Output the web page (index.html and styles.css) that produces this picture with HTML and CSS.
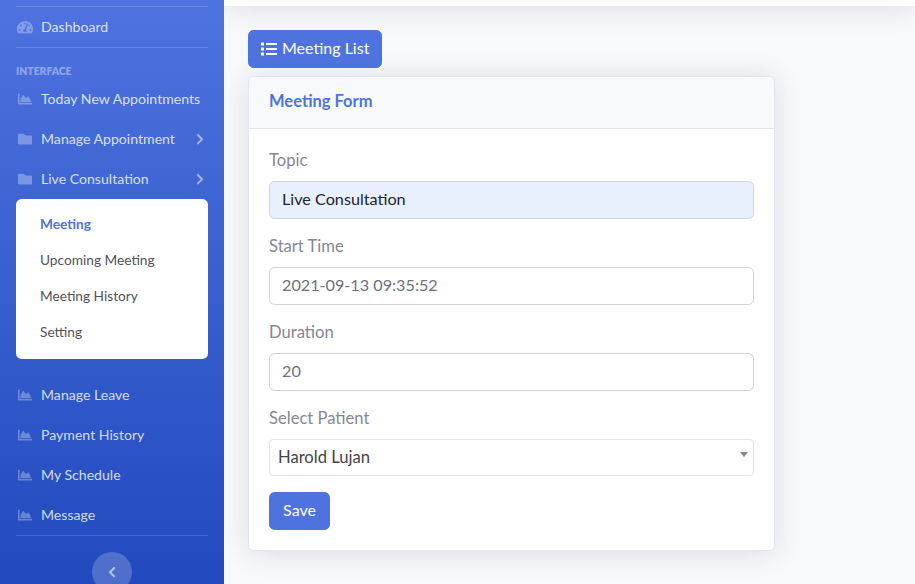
FILE: index.html
```html
<!DOCTYPE html>
<html lang="en">
<head>
  <meta charset="UTF-8" />
  <title>Meeting Form</title>
  <link rel="stylesheet" href="styles.css">
</head>
<body>

  <!-- Sidebar -->
  <aside class="sidebar">
    <hr class="divider first">
    <a class="nav-item dash" href="#">
      <svg class="nav-icon" viewBox="0 0 576 512"><path d="M288 32C128.940 32 0 160.940 0 320c0 52.800 14.250 102.260 39.060 144.800 5.610 9.620 16.300 15.200 27.440 15.200h443c11.140 0 21.830-5.580 27.440-15.200C561.750 422.260 576 372.800 576 320c0-159.060-128.940-288-288-288zm0 64c14.710 0 26.580 10.130 30.320 23.650-1.110 2.260-3.640 3.550-4.190 6.030l-5.910 22.130C305.860 146.270 297.150 160 288 160c-17.670 0-32-14.330-32-32s14.330-32 32-32zM96 384c-17.670 0-32-14.330-32-32s14.330-32 32-32 32 14.330 32 32-14.330 32-32 32zm48-160c-17.670 0-32-14.330-32-32s14.330-32 32-32 32 14.330 32 32-14.330 32-32 32zm246.770-72.410l-61.330 184C343.130 347.330 352 364.540 352 384c0 11.720-3.380 22.550-8.880 32H232.880c-5.500-9.450-8.880-20.280-8.880-32 0-33.940 26.500-61.430 59.900-63.590l61.340-184.010c4.170-12.560 17.730-19.450 30.360-15.170 12.570 4.190 19.350 17.770 15.170 30.360zm14.660 57.200l15.520-46.550c3.470-1.290 7.130-2.230 11.050-2.230 17.670 0 32 14.330 32 32s-14.330 32-32 32c-11.380-.01-20.890-6.280-26.570-15.220zM480 384c-17.670 0-32-14.330-32-32s14.330-32 32-32 32 14.330 32 32-14.330 32-32 32z"/></svg>
      <span>Dashboard</span>
    </a>
    <hr class="divider">
    <div class="heading">INTERFACE</div>

    <a class="nav-item" href="#">
      <svg class="nav-icon" viewBox="0 0 512 512"><use href="#area"/></svg>
      <span>Today New Appointments</span>
    </a>
    <a class="nav-item" href="#">
      <svg class="nav-icon" viewBox="0 0 512 512"><use href="#folder"/></svg>
      <span>Manage Appointment</span>
      <svg class="chev" viewBox="0 0 320 512"><use href="#chev-right"/></svg>
    </a>
    <a class="nav-item" href="#">
      <svg class="nav-icon" viewBox="0 0 512 512"><use href="#folder"/></svg>
      <span>Live Consultation</span>
      <svg class="chev" viewBox="0 0 320 512"><use href="#chev-right"/></svg>
    </a>

    <div class="submenu">
      <a class="active" href="#">Meeting</a>
      <a href="#">Upcoming Meeting</a>
      <a href="#">Meeting History</a>
      <a href="#">Setting</a>
    </div>

    <a class="nav-item" href="#">
      <svg class="nav-icon" viewBox="0 0 512 512"><use href="#area"/></svg>
      <span>Manage Leave</span>
    </a>
    <a class="nav-item" href="#">
      <svg class="nav-icon" viewBox="0 0 512 512"><use href="#area"/></svg>
      <span>Payment History</span>
    </a>
    <a class="nav-item" href="#">
      <svg class="nav-icon" viewBox="0 0 512 512"><use href="#area"/></svg>
      <span>My Schedule</span>
    </a>
    <a class="nav-item" href="#">
      <svg class="nav-icon" viewBox="0 0 512 512"><use href="#area"/></svg>
      <span>Message</span>
    </a>
    <hr class="divider">
    <button class="toggle" type="button">
      <svg viewBox="0 0 320 512"><path d="M34.520 239.030L228.870 44.690c9.370-9.370 24.570-9.370 33.940 0l22.670 22.670c9.360 9.360 9.370 24.520.04 33.900L131.490 256l154.020 154.750c9.340 9.380 9.320 24.540-.04 33.900l-22.670 22.670c-9.370 9.370-24.570 9.370-33.940 0L34.520 272.970c-9.370-9.370-9.370-24.570 0-33.940z"/></svg>
    </button>
  </aside>

  <!-- Content -->
  <main class="content">
    <div class="topbar"></div>
    <div class="page">
      <a class="btn list-btn" href="#">
        <svg class="list-icon" viewBox="0 0 512 512"><path d="M80 368H16a16 16 0 0 0-16 16v64a16 16 0 0 0 16 16h64a16 16 0 0 0 16-16v-64a16 16 0 0 0-16-16zm0-320H16A16 16 0 0 0 0 64v64a16 16 0 0 0 16 16h64a16 16 0 0 0 16-16V64a16 16 0 0 0-16-16zm0 160H16a16 16 0 0 0-16 16v64a16 16 0 0 0 16 16h64a16 16 0 0 0 16-16v-64a16 16 0 0 0-16-16zm416 176H176a16 16 0 0 0-16 16v32a16 16 0 0 0 16 16h320a16 16 0 0 0 16-16v-32a16 16 0 0 0-16-16zm0-320H176a16 16 0 0 0-16 16v32a16 16 0 0 0 16 16h320a16 16 0 0 0 16-16V80a16 16 0 0 0-16-16zm0 160H176a16 16 0 0 0-16 16v32a16 16 0 0 0 16 16h320a16 16 0 0 0 16-16v-32a16 16 0 0 0-16-16z"/></svg>
        Meeting List
      </a>

      <section class="card">
        <header class="card-header">Meeting Form</header>
        <form class="card-body">
          <label for="topic">Topic</label>
          <input class="field filled" type="text" id="topic" value="Live Consultation">

          <label for="start">Start Time</label>
          <input class="field" type="text" id="start" value="2021-09-13 09:35:52">

          <label for="duration">Duration</label>
          <input class="field" type="text" id="duration" value="20">

          <label>Select Patient</label>
          <div class="select">Harold Lujan<span class="caret"></span></div>

          <button class="btn save-btn" type="button">Save</button>
        </form>
      </section>
    </div>
  </main>

  <svg class="defs" width="0" height="0">
    <symbol id="area" viewBox="0 0 512 512"><path d="M500 384c6.600 0 12 5.400 12 12v40c0 6.600-5.400 12-12 12H12c-6.600 0-12-5.400-12-12V76c0-6.600 5.400-12 12-12h40c6.600 0 12 5.400 12 12v308h436zM372.700 159.500L288 216l-85.300-113.700c-5.100-6.800-15.500-6.300-19.900 1L96 248v104h384l-89.900-187.800c-3.200-6.500-11.400-8.700-17.400-4.700z"/></symbol>
    <symbol id="folder" viewBox="0 0 512 512"><path d="M464 128H272l-64-64H48C21.490 64 0 85.490 0 112v288c0 26.510 21.490 48 48 48h416c26.510 0 48-21.490 48-48V176c0-26.510-21.490-48-48-48z"/></symbol>
    <symbol id="chev-right" viewBox="0 0 320 512"><path d="M285.476 272.971L91.132 467.314c-9.373 9.373-24.569 9.373-33.941 0l-22.667-22.667c-9.357-9.357-9.375-24.522-.04-33.901L188.505 256 34.484 101.255c-9.335-9.379-9.317-24.544.04-33.901l22.667-22.667c9.373-9.373 24.569-9.373 33.941 0L285.475 239.030c9.373 9.372 9.373 24.568.001 33.941z"/></symbol>
  </svg>

</body>
</html>
```

FILE: styles.css
```css
* {
  box-sizing: border-box;
}
html, body {
  height: 100%;
}
body {
  margin: 0;
  display: flex;
  height: 584px;
  overflow: hidden;
  font-family: Lato, "Noto Sans", Arial, sans-serif;
  font-size: 16px;
  color: #858796;
  background-color: #f8f9fc;
}
a {
  text-decoration: none;
}
.defs {
  position: absolute;
}

/* sidebar */
.sidebar {
  position: relative;
  z-index: 1;
  width: 224px;
  flex: none;
  display: flex;
  flex-direction: column;
  padding: 0 16px;
  background: linear-gradient(180deg, #4e73df 0%, #224abe 100%);
  overflow: hidden;
}
.divider {
  width: 100%;
  margin: 0;
  border: 0;
  border-top: 1px solid rgba(255, 255, 255, 0.15);
}
.divider.first {
  margin-top: 6px;
}
.heading {
  margin: 17px 0 2px;
  height: 12px;
  line-height: 12px;
  font-size: 10.400px;
  font-weight: 800;
  color: rgba(255, 255, 255, 0.4);
}
.nav-item {
  height: 40px;
  flex: none;
  display: flex;
  align-items: center;
  font-size: 14.100px;
  color: rgba(255, 255, 255, 0.8);
}
.nav-item span {
  margin-bottom: 2px;
}
.nav-icon {
  width: 18px;
  height: 14.400px;
  margin-right: 7px;
  flex: none;
  fill: rgba(255, 255, 255, 0.3);
}
.chev {
  width: 8px;
  height: 12.300px;
  margin-left: auto;
  margin-right: 4px;
  fill: rgba(255, 255, 255, 0.5);
}
.submenu {
  height: 160px;
  flex: none;
  margin-bottom: 16px;
  padding: 8px 0;
  background-color: #fff;
  border-radius: 5.600px;
}
.submenu a {
  display: flex;
  align-items: center;
  height: 36px;
  padding: 0 0 4px 24px;
  font-size: 13.700px;
  color: #50515c;
}
.submenu a.active {
  font-weight: 700;
  color: #4e73df;
}
.toggle {
  width: 40px;
  height: 40px;
  flex: none;
  margin: 16px auto 0;
  padding: 0;
  display: flex;
  align-items: center;
  justify-content: center;
  border: 0;
  border-radius: 50%;
  background-color: rgba(255, 255, 255, 0.2);
}
.toggle svg {
  width: 8px;
  height: 12.300px;
  margin-right: 1px;
  fill: rgba(255, 255, 255, 0.6);
}

/* content */
.content {
  flex: 1;
  min-width: 0;
}
.topbar {
  height: 70px;
  margin-top: -64px;
  background-color: #fff;
  box-shadow: 0 2px 28px 0 rgba(58, 59, 69, 0.15);
}
.page {
  padding: 24px 0 0 24px;
}
.btn {
  display: inline-flex;
  align-items: center;
  justify-content: center;
  height: 38px;
  padding: 0 0 3px;
  border: 1px solid #4e73df;
  border-radius: 5.600px;
  background-color: #4e73df;
  color: #fff;
  font-family: inherit;
  font-size: 16px;
}
.list-btn {
  width: 134px;
  justify-content: flex-start;
  padding-left: 12px;
  gap: 5px;
}
.list-icon {
  width: 16px;
  height: 16px;
  margin-top: 3px;
  fill: #fff;
}
.card {
  width: 527px;
  height: 475px;
  margin-top: 8px;
  background-color: #fff;
  border: 1px solid #e3e6f0;
  border-radius: 5.600px;
  box-shadow: 0 2px 28px 0 rgba(58, 59, 69, 0.15);
  overflow: hidden;
}
.card-header {
  height: 52px;
  padding-left: 20px;
  line-height: 48px;
  font-size: 16.500px;
  font-weight: 700;
  color: #4e73df;
  background-color: #f8f9fc;
  border-bottom: 1px solid #e3e6f0;
}
.card-body {
  padding: 20px;
}
label {
  display: block;
  height: 24px;
  line-height: 22px;
  margin-bottom: 8px;
  font-size: 16.600px;
}
.field {
  display: block;
  width: 100%;
  height: 38px;
  margin-bottom: 16px;
  padding: 4px 12px 8px;
  border: 1px solid #d1d3e2;
  border-radius: 5.600px;
  background-color: #fff;
  color: #6e707e;
  font-family: inherit;
  font-size: 16.200px;
}
.field.filled {
  background-color: #e8f0fe;
  color: #212529;
}
.select {
  position: relative;
  height: 37px;
  margin-bottom: 16px;
  padding-left: 8px;
  line-height: 35px;
  font-size: 16.600px;
  color: #444;
  border: 1px solid #e4e6ea;
  border-radius: 4px;
}
.caret {
  position: absolute;
  top: 12px;
  right: 5px;
  border-style: solid;
  border-width: 5px 4px 0;
  border-color: #888 transparent transparent;
}
.save-btn {
  width: 61px;
}
```
